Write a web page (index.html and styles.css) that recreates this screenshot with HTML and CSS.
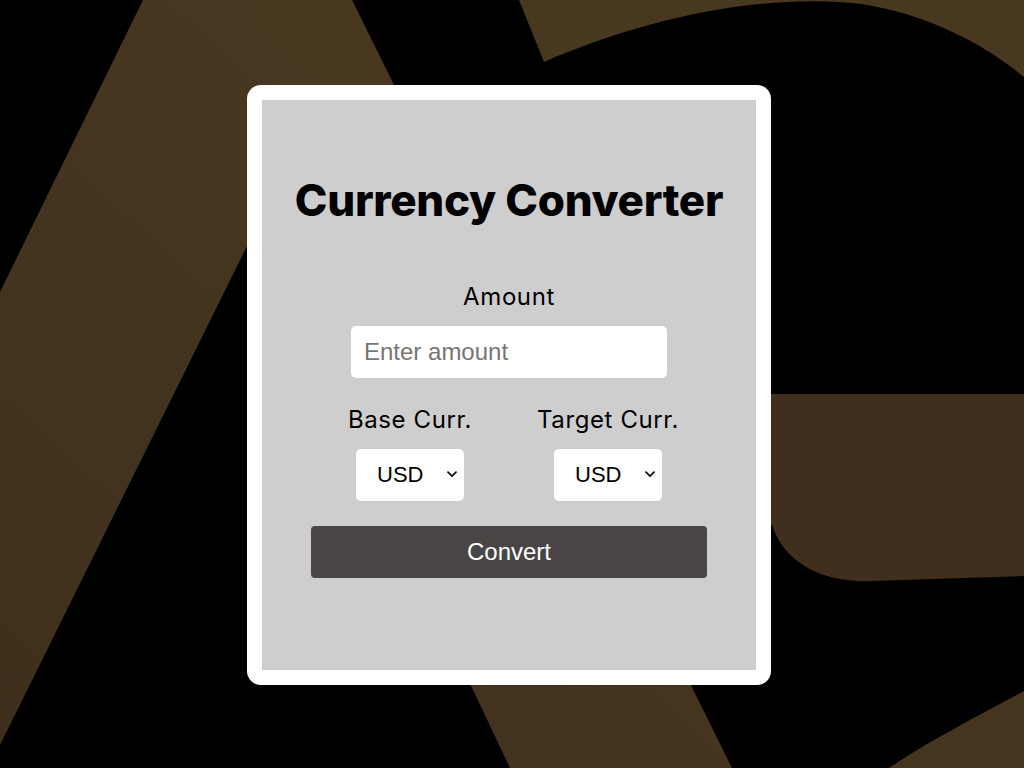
FILE: index.html
```html
<!DOCTYPE html>
<html lang="en">
<head>
<meta charset="utf-8">
<title>Currency Converter</title>
<link rel="stylesheet" href="styles.css">
</head>
<body>
<div class="backdrop" aria-hidden="true">
  <svg viewBox="0 0 1024 768" preserveAspectRatio="none" xmlns="http://www.w3.org/2000/svg">
    <defs>
      <linearGradient id="gA" gradientUnits="userSpaceOnUse" x1="0" y1="768" x2="700" y2="0">
        <stop offset="0" stop-color="#3e2f1c"/>
        <stop offset="0.5" stop-color="#45351f"/>
        <stop offset="1" stop-color="#4b3b21"/>
      </linearGradient>
    </defs>
    <polygon fill="url(#gA)" points="143,0 352,0 732,768 510,768 255,230 0,745 0,292"/>
    <path fill="#483820" d="M519,0 L1024,0 L1024,77 C985,45 930,15 862,4 C760,-8 640,20 544,62 Z"/>
    <path fill="#3f2f1c" d="M700,394 L1024,394 L1024,576 L872,581 C825,583 785,565 772,525 L700,525 Z"/>
    <path fill="#45351f" d="M1024,691 L1024,768 L889,768 C930,740 980,715 1024,691 Z"/>
  </svg>
</div>
<main class="card">
  <div class="panel">
    <h1 class="title">Currency Converter</h1>
    <form class="form">
      <label class="label" for="amount">Amount</label>
      <input id="amount" class="amount" type="text" placeholder="Enter amount">
      <div class="pair">
        <div class="col">
          <label class="label" for="base">Base Curr.</label>
          <select id="base" class="currency"><option>USD</option></select>
        </div>
        <div class="col">
          <label class="label" for="target">Target Curr.</label>
          <select id="target" class="currency"><option>USD</option></select>
        </div>
      </div>
      <button class="convert" type="button">Convert</button>
    </form>
  </div>
</main>
</body>
</html>
```

FILE: styles.css
```css
html, body {
  margin: 0;
  height: 100%;
}

body {
  box-sizing: border-box;
  background: #000;
  display: flex;
  align-items: center;
  justify-content: center;
  padding: 2px 6px 0 0;
  font-family: Inter, "Open Sans", sans-serif;
  color: #000;
}

.backdrop {
  position: fixed;
  inset: 0;
  z-index: 0;
}

.backdrop svg {
  display: block;
  width: 100%;
  height: 100%;
}

.card {
  position: relative;
  z-index: 1;
  box-sizing: border-box;
  width: 524px;
  height: 600px;
  padding: 15px;
  background: #fff;
  border-radius: 14px;
}

.panel {
  box-sizing: border-box;
  height: 100%;
  background: #cecece;
  padding-top: 74px;
  display: flex;
  flex-direction: column;
  align-items: center;
}

.title {
  margin: 0;
  font-size: 44px;
  line-height: 52.8px;
  font-weight: 800;
  letter-spacing: -0.3px;
  white-space: nowrap;
}

.form {
  margin-top: 54px;
  width: 396px;
  display: flex;
  flex-direction: column;
  align-items: center;
}

.label {
  display: block;
  font-size: 24px;
  line-height: 32px;
  font-weight: 400;
  letter-spacing: 0.6px;
  margin-bottom: 13px;
  text-align: center;
}

.amount {
  box-sizing: border-box;
  width: 316px;
  height: 52px;
  border: none;
  border-radius: 5px;
  background: #fff;
  padding: 0 13px;
  font-family: "Liberation Sans", Arial, sans-serif;
  font-size: 24px;
  margin: 0 0 26px;
  outline: none;
}

.amount::placeholder {
  color: #757575;
}

.pair {
  width: 100%;
  display: grid;
  grid-template-columns: 1fr 1fr;
}

.col {
  display: flex;
  flex-direction: column;
  align-items: center;
}

.currency {
  -webkit-appearance: none;
  appearance: none;
  box-sizing: border-box;
  width: 108px;
  height: 52px;
  border: none;
  border-radius: 5px;
  background-color: #fff;
  background-image: url("data:image/svg+xml,%3Csvg xmlns='http://www.w3.org/2000/svg' width='10' height='7' viewBox='0 0 10 7'%3E%3Cpath d='M1 1.2 L5 5.2 L9 1.2' fill='none' stroke='%23111' stroke-width='1.8' stroke-linecap='round' stroke-linejoin='round'/%3E%3C/svg%3E");
  background-repeat: no-repeat;
  background-position: right 7px center;
  background-size: 10px 7px;
  color: #000;
  padding: 0 0 0 21px;
  font-family: "Liberation Sans", Arial, sans-serif;
  font-size: 22px;
  margin: 0 0 25px;
}

.convert {
  box-sizing: border-box;
  width: 396px;
  height: 52px;
  border: none;
  border-radius: 4px;
  background: #4a4545;
  color: #fff;
  font-family: "Liberation Sans", Arial, sans-serif;
  font-size: 24px;
  cursor: pointer;
}
```
